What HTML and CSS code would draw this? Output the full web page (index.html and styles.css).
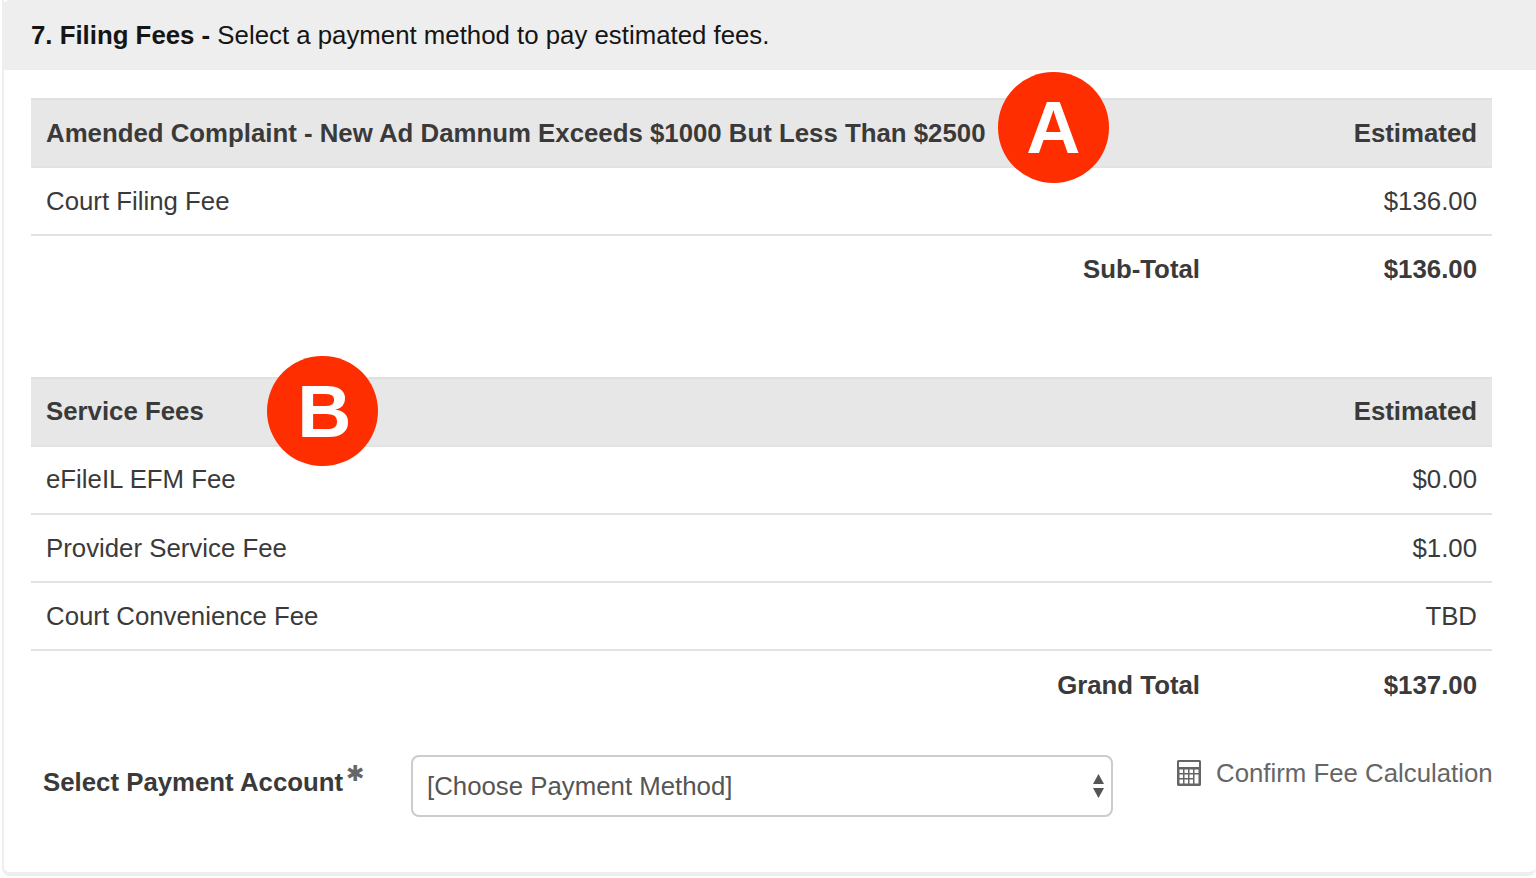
FILE: index.html
```html
<!DOCTYPE html>
<html lang="en">
<head>
<meta charset="utf-8">
<title>Filing Fees</title>
<link rel="stylesheet" href="styles.css">
</head>
<body>
<section class="panel">
  <h2 class="panel-head"><b>7. Filing Fees -</b> Select a payment method to pay estimated fees.</h2>
  <div class="panel-body">
    <div class="fee-table">
      <div class="row head">
        <span class="name">Amended Complaint - New Ad Damnum Exceeds $1000 But Less Than $2500</span>
        <span class="badge badge-a">A</span>
        <span class="amount">Estimated</span>
      </div>
      <div class="row"><span class="name">Court Filing Fee</span><span class="amount">$136.00</span></div>
      <div class="row total"><span class="name">Sub-Total</span><span class="amount">$136.00</span></div>
    </div>
    <div class="fee-table second">
      <div class="row head">
        <span class="name">Service Fees</span>
        <span class="badge badge-b">B</span>
        <span class="amount">Estimated</span>
      </div>
      <div class="row"><span class="name">eFileIL EFM Fee</span><span class="amount">$0.00</span></div>
      <div class="row"><span class="name">Provider Service Fee</span><span class="amount">$1.00</span></div>
      <div class="row"><span class="name">Court Convenience Fee</span><span class="amount">TBD</span></div>
      <div class="row total"><span class="name">Grand Total</span><span class="amount">$137.00</span></div>
    </div>
    <div class="pay-row">
      <label class="pay-label" for="pay">Select Payment Account<span class="req">✱</span></label>
      <div class="select-wrap">
        <select id="pay" class="pay-select"><option>[Choose Payment Method]</option></select>
        <svg class="select-arrows" width="13" height="26" viewBox="0 0 13 26" aria-hidden="true"><path d="M6.500 1 12 11H1z"/><path d="M1 15h11L6.500 25z"/></svg>
      </div>
      <a class="confirm" href="#">
        <svg class="calc" width="24" height="26" viewBox="0 0 24 26" aria-hidden="true">
          <path fill-rule="evenodd" d="M1.500 0h21A1.500 1.500 0 0 1 24 1.500v23a1.500 1.500 0 0 1-1.500 1.500h-21A1.500 1.500 0 0 1 0 24.500v-23A1.500 1.500 0 0 1 1.500 0zM2 2v5h20V2zM2.500 9.500V13H6V9.500zM7.500 9.500V13H11V9.500zM12.500 9.500V13H16V9.500zM17.500 9.500V13H21.500V9.500zM2.500 14.500V18H6v-3.500zM7.500 14.500V18H11v-3.500zM12.500 14.500V18H16v-3.500zM2.500 19.500V23.500H6v-4zM7.500 19.500V23.500H11v-4zM12.500 19.500V23.500H16v-4zM17.500 14.500V23.500H21.500v-9z"/>
        </svg>
        Confirm Fee Calculation
      </a>
    </div>
  </div>
</section>
</body>
</html>
```
FILE: styles.css
```css
* { box-sizing: border-box; }
html, body { margin: 0; height: 100%; overflow: hidden; background: #fff; }
body { font-family: "Liberation Sans", Arial, sans-serif; color: #3a3a3a; }

.panel {
  margin-left: 2px;
  height: 876px;
  border: solid #eee;
  border-width: 0 0 4px 2px;
  border-radius: 0 0 8px 8px;
  background: #fff;
}
.panel-head {
  margin: 0 0 0 -2px;
  height: 70px;
  padding: 20px 0 0 29px;
  background: #eee;
  border-radius: 8px 0 0 0;
  font-size: 25.8px;
  line-height: 30px;
  font-weight: 400;
  color: #151515;
}
.panel-body { padding: 28px 40px 0 27px; }

.fee-table { width: 1461px; }
.second { margin-top: 72px; }

.row {
  position: relative;
  display: flex;
  justify-content: space-between;
  align-items: center;
  height: 68.3px;
  padding: 0 15px;
  border-bottom: 2px solid #e2e2e2;
  font-size: 25.8px;
}
.head {
  height: 70px;
  background: #e7e7e7;
  border-top: 2px solid #e0e0e0;
  font-weight: 700;
}
.total { border-bottom: 0; padding-bottom: 1px; font-weight: 700; justify-content: flex-end; }
.total .name { width: 1154px; text-align: right; flex: none; }
.total .amount { flex: 1; text-align: right; }

.badge {
  position: absolute;
  width: 110.5px;
  height: 110.5px;
  border-radius: 50%;
  background: #ff2e00;
  color: #fff;
  font-size: 75px;
  font-weight: 700;
  line-height: 110px;
  text-align: center;
}
.badge-a { left: 967px; top: -28px; }
.badge-b { left: 236px; top: -23px; padding-left: 4px; }

.pay-row { position: relative; display: flex; align-items: flex-start; margin-top: 35px; }
.pay-label {
  flex: none;
  width: 368px;
  margin: 12px 0 0 12px;
  font-size: 25.8px;
  line-height: 30px;
  font-weight: 700;
  white-space: nowrap;
}
.req {
  position: relative;
  top: -10px;
  margin-left: 3px;
  color: #666;
  font-family: "DejaVu Sans", sans-serif;
  font-size: 22px;
  line-height: 0;
}
.select-wrap { position: relative; flex: none; width: 702px; height: 62px; }
.pay-select {
  appearance: none;
  width: 100%;
  height: 100%;
  padding: 0 40px 0 14px;
  border: 2px solid #ccc;
  border-radius: 8px;
  background: #fff;
  color: #555;
  font: 25.8px "Liberation Sans", Arial, sans-serif;
}
.select-arrows { position: absolute; right: 8px; top: 18px; fill: #555; }
.confirm {
  display: flex;
  flex: none;
  align-items: center;
  gap: 15px;
  margin: 3px 0 0 64px;
  font-size: 25.8px;
  line-height: 30px;
  color: #666;
  text-decoration: none;
  white-space: nowrap;
}
.calc { fill: #666; flex: none; }
```
